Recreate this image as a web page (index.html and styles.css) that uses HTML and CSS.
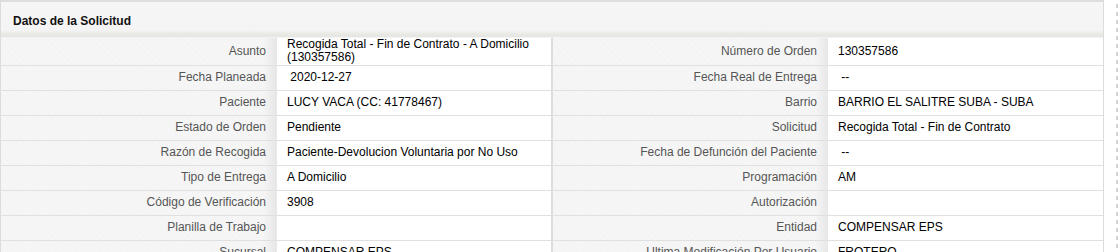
FILE: index.html
```html
<!DOCTYPE html>
<html lang="es">
<head>
<meta charset="utf-8">
<title>Datos de la Solicitud</title>
<link rel="stylesheet" href="styles.css">
</head>
<body>
<div class="page">
  <section class="panel">
    <header class="panel-head">Datos de la Solicitud</header>
    <table class="details">
      <colgroup>
        <col class="c-label"><col class="c-value"><col class="c-label2"><col class="c-value2">
      </colgroup>
      <tbody>
        <tr class="tall">
          <th>Asunto</th><td class="v1">Recogida Total - Fin de Contrato - A Domicilio<br>(130357586)</td>
          <th class="l2">Número de Orden</th><td>130357586</td>
        </tr>
        <tr>
          <th>Fecha Planeada</th><td class="v1">&nbsp;2020-12-27</td>
          <th class="l2">Fecha Real de Entrega</th><td>&nbsp;--</td>
        </tr>
        <tr>
          <th>Paciente</th><td class="v1">LUCY VACA (CC: 41778467)</td>
          <th class="l2">Barrio</th><td>BARRIO EL SALITRE SUBA - SUBA</td>
        </tr>
        <tr>
          <th>Estado de Orden</th><td class="v1">Pendiente</td>
          <th class="l2">Solicitud</th><td>Recogida Total - Fin de Contrato</td>
        </tr>
        <tr>
          <th>Razón de Recogida</th><td class="v1">Paciente-Devolucion Voluntaria por No Uso</td>
          <th class="l2">Fecha de Defunción del Paciente</th><td>&nbsp;--</td>
        </tr>
        <tr>
          <th>Tipo de Entrega</th><td class="v1">A Domicilio</td>
          <th class="l2">Programación</th><td>AM</td>
        </tr>
        <tr>
          <th>Código de Verificación</th><td class="v1">3908</td>
          <th class="l2">Autorización</th><td></td>
        </tr>
        <tr>
          <th>Planilla de Trabajo</th><td class="v1"></td>
          <th class="l2">Entidad</th><td>COMPENSAR EPS</td>
        </tr>
        <tr>
          <th>Sucursal</th><td class="v1">COMPENSAR EPS</td>
          <th class="l2">Ultima Modificación Por Usuario</th><td>FROTERO</td>
        </tr>
      </tbody>
    </table>
  </section>
  <div class="rail"></div>
</div>
</body>
</html>
```

FILE: styles.css
```css
html, body {
  margin: 0;
  padding: 0;
  background: #ffffff;
  overflow: hidden;
}

.page {
  display: flex;
  align-items: flex-start;
  font-family: "Liberation Sans", Arial, sans-serif;
  font-size: 12px;
}

.panel {
  width: 1104px;
  box-sizing: border-box;
  border: 1px solid #dcdcdc;
  border-top: 2px solid #dedede;
  flex: none;
}

.panel-head {
  height: 36px;
  box-sizing: border-box;
  padding: 12px 0 0 12px;
  font-weight: bold;
  font-size: 12px;
  color: #111;
  background: linear-gradient(to bottom, #f6f6f6 0, #f4f4f4 28px, #e9e9e5 32px, #e3e3df 36px);
  border-bottom: 1px solid #f4f4f4;
}

.details {
  width: 1102px;
  table-layout: fixed;
  border-collapse: collapse;
}

.c-label { width: 276px; }
.c-value { width: 275px; }
.c-label2 { width: 276px; }
.c-value2 { width: 275px; }

.details th,
.details td {
  height: 25px;
  line-height: 13px;
  padding: 0 10px;
  border-bottom: 1px solid #e0e0e0;
  vertical-align: middle;
  box-sizing: border-box;
  white-space: nowrap;
  overflow: hidden;
}

.details tr.tall th,
.details tr.tall td {
  height: 27px;
  padding-top: 0;
  padding-bottom: 0;
}

.details th {
  font-weight: normal;
  text-align: right;
  color: #555555;
  padding-right: 11px;
  background:
    linear-gradient(to right, rgba(230,230,230,0) 0, rgba(230,230,230,0) 262px, #e6e6e6 276px),
    repeating-linear-gradient(45deg, #f6f6f6 0, #f6f6f6 2px, #f4f4f4 2px, #f4f4f4 4px);
}

.details td {
  color: #000;
  background: #ffffff;
  text-align: left;
}

.details td.v1 {
  border-right: 2px solid #dddddd;
}

.rail {
  flex: none;
  width: 2px;
  height: 252px;
  margin-left: 12px;
  background: repeating-linear-gradient(to bottom, #d4d4d4 0, #d4d4d4 4px, transparent 4px, transparent 8px);
  margin-top: 4px;
}
```
